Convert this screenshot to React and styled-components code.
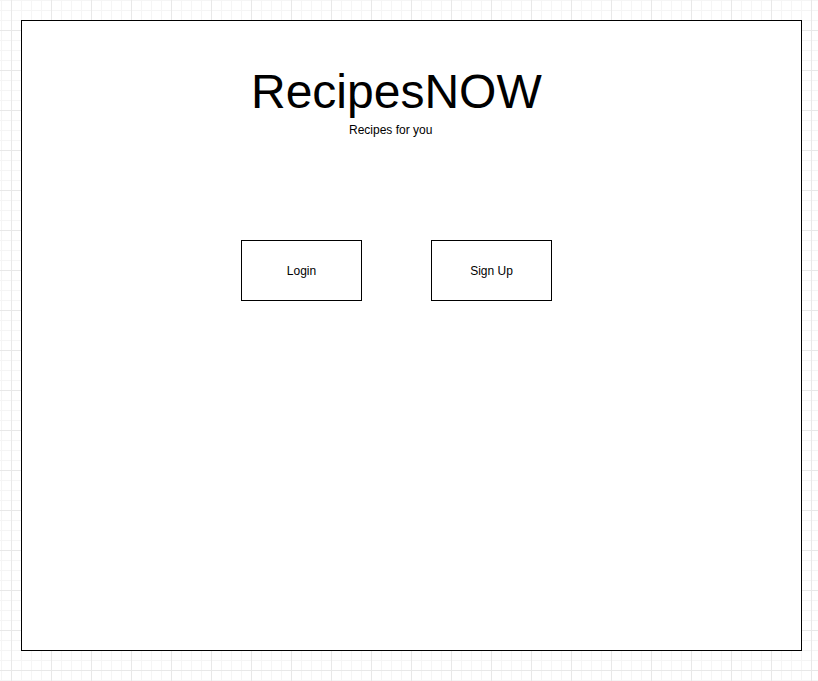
import React from 'react';
import styled, { createGlobalStyle } from 'styled-components';

const GlobalStyle = createGlobalStyle`
  html, body {
    margin: 0;
    padding: 0;
  }
  body {
    width: 818px;
    height: 681px;
    overflow: hidden;
    font-family: 'Liberation Sans', Arial, Helvetica, sans-serif;
    color: #000;
    background-color: #fff;
    background-image:
      linear-gradient(to right, #e8e8e8 1px, transparent 1px),
      linear-gradient(to bottom, #e8e8e8 1px, transparent 1px),
      linear-gradient(to right, #f5f5f5 1px, transparent 1px),
      linear-gradient(to bottom, #f5f5f5 1px, transparent 1px);
    background-size: 40px 40px, 40px 40px, 10px 10px, 10px 10px;
    background-position: 11px 0, 0 30px, 1px 0, 0 0;
  }
`;

const Page = styled.div`
  padding: 20px 0 0 21px;
`;

const Frame = styled.div`
  box-sizing: border-box;
  width: 781px;
  height: 631px;
  border: 1px solid #000;
  background: #fff;
  padding-top: 47px;
`;

const Title = styled.h1`
  margin: 0 0 0 229px;
  font-size: 48px;
  font-weight: normal;
  line-height: 1;
`;

const Subtitle = styled.p`
  margin: 8px 0 0 327px;
  font-size: 12px;
  line-height: 1;
`;

const ButtonRow = styled.div`
  display: flex;
  gap: 69px;
  margin: 104px 0 0 219px;
`;

const BoxButton = styled.button`
  box-sizing: border-box;
  width: 121px;
  height: 61px;
  border: 1px solid #000;
  background: #fff;
  font-family: inherit;
  font-size: 12px;
  color: #000;
  padding: 0;
  cursor: pointer;
`;

const App = () => {
  return (
    <>
      <GlobalStyle />
      <Page>
        <Frame>
          <Title>RecipesNOW</Title>
          <Subtitle>Recipes for you</Subtitle>
          <ButtonRow>
            <BoxButton>Login</BoxButton>
            <BoxButton>Sign Up</BoxButton>
          </ButtonRow>
        </Frame>
      </Page>
    </>
  );
};

export default App;
